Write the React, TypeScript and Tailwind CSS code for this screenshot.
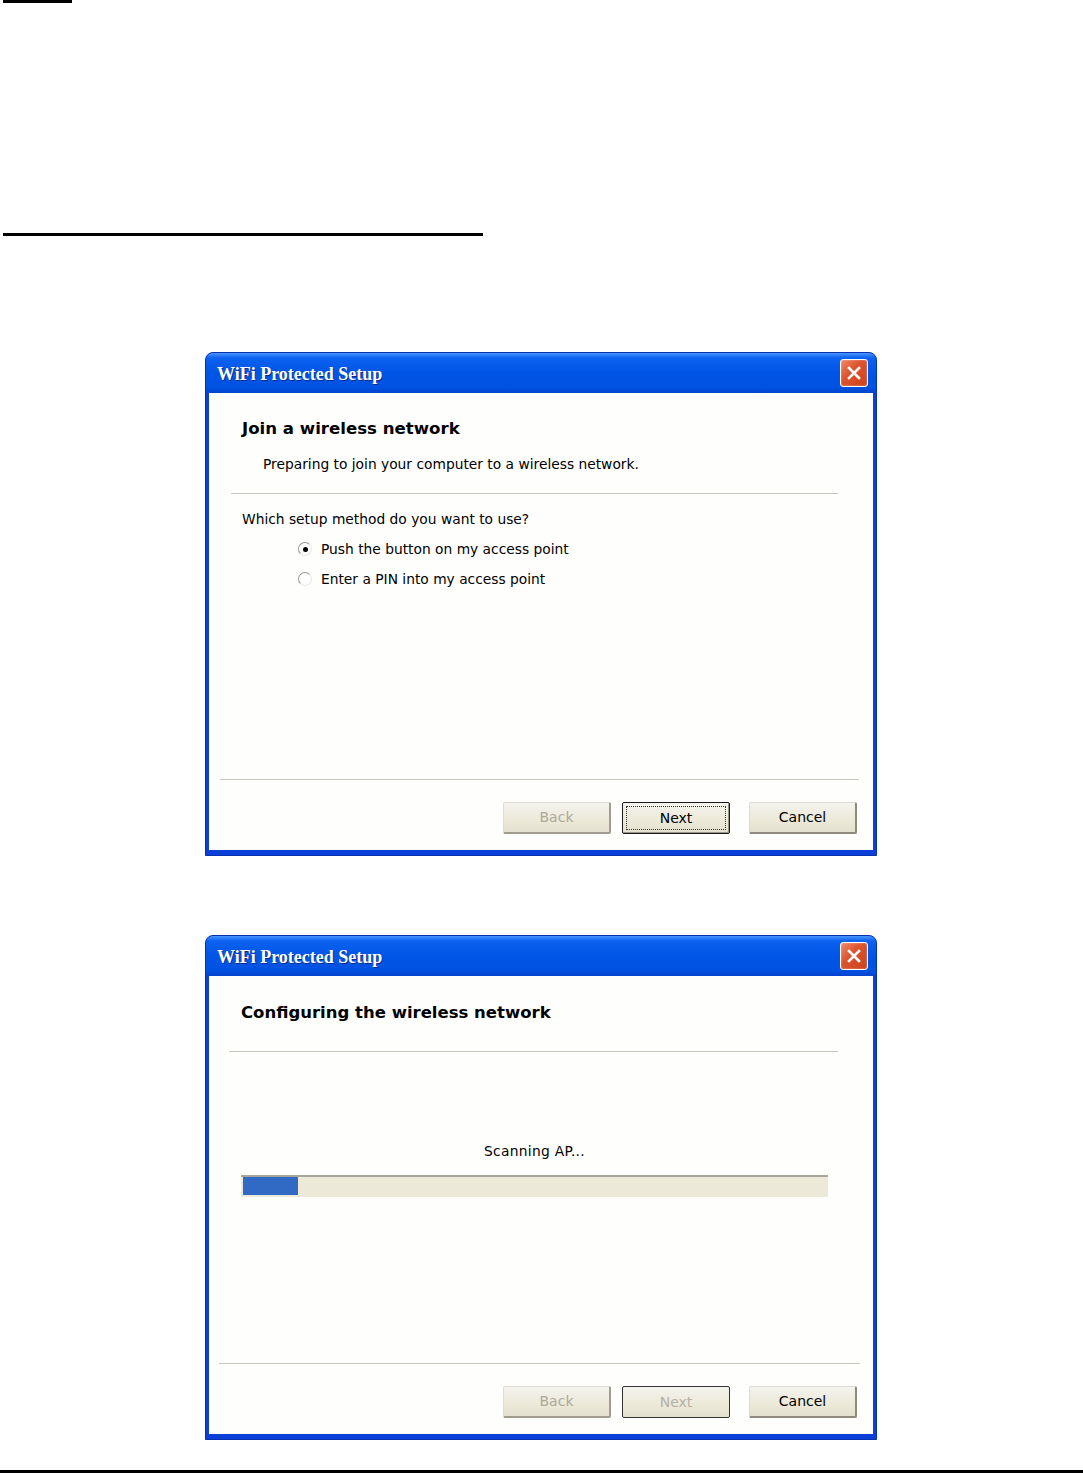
import React from "react";

function CloseButton() {
  return (
    <div className="w-[28px] h-[28px] rounded-[3px] border border-white bg-[linear-gradient(135deg,#f08a6a_0%,#dd5530_40%,#c8421c_100%)] flex items-center justify-center shadow-[inset_0_0_2px_rgba(255,255,255,0.5)]">
      <svg width="16" height="16" viewBox="0 0 16 16">
        <path d="M3 3 L13 13 M13 3 L3 13" stroke="#ffffff" strokeWidth="2.6" strokeLinecap="square" />
      </svg>
    </div>
  );
}

function Window({ children }: { children: React.ReactNode }) {
  return (
    <div className="w-[672px] rounded-t-[8px] overflow-hidden bg-[#0a3fd8] border border-[#0831b0] flex flex-col">
      <div className="h-[40px] shrink-0 bg-[linear-gradient(to_bottom,#4a95ff_0%,#0d62f0_12%,#0056e6_45%,#0052e2_85%,#0344cc_100%)] flex items-center justify-between pl-[11px] pr-[8px]">
        <span className="font-['Liberation_Serif',serif] font-bold text-[18px] text-white [text-shadow:1px_1px_0_#0a2a8a] pt-[2px]">
          WiFi Protected Setup
        </span>
        <CloseButton />
      </div>
      <div className="mx-[3px] mb-[5px] bg-[#fefefd] flex flex-col font-['DejaVu_Sans',sans-serif] text-[#000]">
        {children}
      </div>
    </div>
  );
}

function Button({ label, kind }: { label: string; kind: "disabled" | "default" | "normal" | "disabledDark" }) {
  const base =
    "w-[108px] h-[32px] flex items-center justify-center text-[14px] rounded-[2px] bg-[linear-gradient(to_bottom,#f4f3ee_0%,#ece9d8_60%,#e3e0cf_100%)]";
  if (kind === "default") {
    return (
      <div className={base + " border border-[#1a1a1a] shadow-[inset_-1px_-1px_0_#9a978a] p-[3px]"}>
        <div className="w-full h-full border border-dotted border-[#333] flex items-center justify-center">{label}</div>
      </div>
    );
  }
  if (kind === "disabledDark") {
    return <div className={base + " border border-[#333] text-[#b3b0a4]"}>{label}</div>;
  }
  if (kind === "disabled") {
    return (
      <div className={base + " border border-[#e0ddd0] border-r-[#a09d90] border-b-[#a09d90] border-r-2 border-b-2 text-[#aca899]"}>{label}</div>
    );
  }
  return (
    <div className={base + " border border-[#e0ddd0] border-r-[#8e8b7e] border-b-[#8e8b7e] border-r-2 border-b-2"}>{label}</div>
  );
}

function Radio({ checked }: { checked?: boolean }) {
  return (
    <div className="w-[14px] h-[14px] rounded-full border border-t-[#9a9a9a] border-l-[#9a9a9a] border-r-[#e8e8e8] border-b-[#e8e8e8] bg-white flex items-center justify-center">
      {checked && <div className="w-[5px] h-[5px] rounded-full bg-black" />}
    </div>
  );
}

export default function App() {
  return (
    <div className="w-[1083px] h-[1473px] bg-white flex flex-col">
      <div className="ml-[3px] w-[69px] h-[3px] bg-black" />
      <div className="mt-[230px] ml-[3px] w-[480px] h-[3px] bg-black" />

      <div className="mt-[116px] ml-[205px]">
        <Window>
          <div className="h-[457px] flex flex-col">
            <div className="pl-[33px] pt-[26px] text-[16.6px] font-bold leading-[20px]">Join a wireless network</div>
            <div className="pl-[54px] mt-[17px] text-[13.8px] leading-[16px]">Preparing to join your computer to a wireless network.</div>
            <div className="ml-[22px] mr-[35px] mt-[21px] h-[2px] bg-[#c9c6bc] border-b border-white" />
            <div className="pl-[33px] mt-[16px] text-[13.8px] leading-[16px]">Which setup method do you want to use?</div>
            <div className="pl-[89px] mt-[14px] flex items-center gap-[9px] text-[13.8px] leading-[16px]">
              <Radio checked />
              <span>Push the button on my access point</span>
            </div>
            <div className="pl-[89px] mt-[14px] flex items-center gap-[9px] text-[13.8px] leading-[16px]">
              <Radio />
              <span>Enter a PIN into my access point</span>
            </div>
            <div className="flex-1" />
            <div className="ml-[11px] mr-[14px] h-[2px] bg-[#c9c6bc] border-b border-white" />
            <div className="mt-[21px] mb-[16px] mr-[16px] flex justify-end">
              <Button label="Back" kind="disabled" />
              <div className="w-[11px]" />
              <Button label="Next" kind="default" />
              <div className="w-[19px]" />
              <Button label="Cancel" kind="normal" />
            </div>
          </div>
        </Window>
      </div>

      <div className="mt-[79px] ml-[205px]">
        <Window>
          <div className="h-[458px] flex flex-col">
            <div className="pl-[32px] pt-[27px] text-[16.5px] font-bold leading-[20px]">Configuring the wireless network</div>
            <div className="ml-[20px] mr-[35px] mt-[28px] h-[2px] bg-[#c9c6bc] border-b border-white" />
            <div className="pl-[32px] pr-[45px] mt-[90px] text-center text-[13.8px] leading-[16px] tracking-[0.3px]">Scanning AP...</div>
            <div className="ml-[32px] mr-[45px] mt-[16px] h-[22px] bg-[#ece9d8] border-t-2 border-[#a8a69c] p-[2px] pt-0">
              <div className="w-[55px] h-full bg-[#316ac5]" />
            </div>
            <div className="flex-1" />
            <div className="ml-[10px] mr-[13px] h-[2px] bg-[#c9c6bc] border-b border-white" />
            <div className="mt-[21px] mb-[16px] mr-[16px] flex justify-end">
              <Button label="Back" kind="disabled" />
              <div className="w-[11px]" />
              <Button label="Next" kind="disabledDark" />
              <div className="w-[19px]" />
              <Button label="Cancel" kind="normal" />
            </div>
          </div>
        </Window>
      </div>

      <div className="flex-1" />
      <div className="h-[3px] bg-black" />
    </div>
  );
}
